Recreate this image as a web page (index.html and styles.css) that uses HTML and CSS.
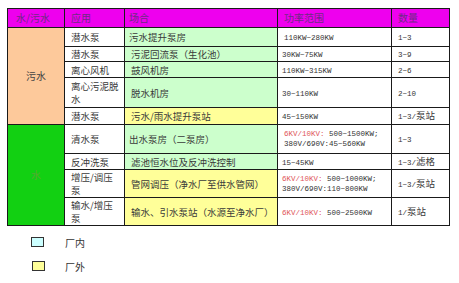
FILE: index.html
```html
<!DOCTYPE html>
<html lang="zh">
<head>
<meta charset="utf-8">
<link rel="stylesheet" href="styles.css">
</head>
<body>
<table class="grid">
  <colgroup>
    <col class="c1"><col class="c2"><col class="c3"><col class="c4"><col class="c5">
  </colgroup>
  <thead>
    <tr class="h-head">
      <th>水/污水</th><th>应用</th><th>场合</th><th>功率范围</th><th>数量</th>
    </tr>
  </thead>
  <tbody>
    <tr class="h-r1">
      <td rowspan="5" class="grp sewage">污水</td>
      <td>潜水泵</td><td class="in">污水提升泵房</td>
      <td><span class="num">110KW~280KW</span></td><td><span class="num">1~3</span></td>
    </tr>
    <tr class="h-r2">
      <td>潜水泵</td><td class="in">污泥回流泵（生化池）</td>
      <td><span class="num">30KW~75KW</span></td><td><span class="num">3~9</span></td>
    </tr>
    <tr class="h-r3">
      <td>离心风机</td><td class="in">鼓风机房</td>
      <td><span class="num">110KW~315KW</span></td><td><span class="num">2~6</span></td>
    </tr>
    <tr class="h-r4">
      <td class="wrap">离心污泥脱<br>水</td><td class="in">脱水机房</td>
      <td><span class="num">30~110KW</span></td><td><span class="num">2~10</span></td>
    </tr>
    <tr class="h-r5">
      <td>潜水泵</td><td class="out">污水/雨水提升泵站</td>
      <td><span class="num">45~150KW</span></td><td><span class="num">1~3/</span>泵站</td>
    </tr>
    <tr class="h-r6">
      <td rowspan="4" class="grp water">水</td>
      <td>清水泵</td><td class="in">出水泵房（二泵房）</td>
      <td><span class="num two"><span class="red">6KV/10KV:</span> 500~1500KW;<br>380V/690V:45~560KW</span></td>
      <td><span class="num">1~3</span></td>
    </tr>
    <tr class="h-r7">
      <td>反冲洗泵</td><td class="in">滤池恒水位及反冲洗控制</td>
      <td><span class="num">15~45KW</span></td><td><span class="num">1~3/</span>滤格</td>
    </tr>
    <tr class="h-r8">
      <td class="wrap">增压/调压<br>泵</td><td class="out">管网调压（净水厂至供水管网）</td>
      <td><span class="num two"><span class="red">6KV/10KV:</span> 500~1000KW;<br>380V/690V:110~800KW</span></td>
      <td><span class="num">1~3/</span>泵站</td>
    </tr>
    <tr class="h-r9">
      <td class="wrap">输水/增压<br>泵</td><td class="out">输水、引水泵站（水源至净水厂）</td>
      <td><span class="num"><span class="red">6KV/10KV:</span> 500~2500KW</span></td>
      <td><span class="num">1/</span>泵站</td>
    </tr>
  </tbody>
</table>

<ul class="legend">
  <li><span class="swatch sw-in"></span><span class="label">厂内</span></li>
  <li><span class="swatch sw-out"></span><span class="label">厂外</span></li>
</ul>
</body>
</html>
```

FILE: styles.css
```css
html, body {
  margin: 0;
  padding: 0;
  background: #ffffff;
}

body {
  width: 459px;
  height: 283px;
  overflow: hidden;
  font-family: "Noto Sans CJK SC", "DejaVu Sans", sans-serif;
  color: #3a3a3a;
}

.grid {
  margin: 8px 0 0 7px;
  border-collapse: collapse;
  table-layout: fixed;
  width: 442px;
  font-size: 9.5px;
  line-height: 12px;
}

.c1 { width: 57px; }
.c2 { width: 60px; }
.c3 { width: 153px; }
.c4 { width: 114px; }
.c5 { width: 58px; }

.grid th,
.grid td {
  border: 1px solid #1a1a1a;
  padding: 0 0 0 6px;
  text-align: left;
  vertical-align: middle;
  font-weight: normal;
  overflow: hidden;
  white-space: nowrap;
}

.grid td:nth-child(3),
.grid th:nth-child(3) { padding-left: 4px; }

.grid thead th {
  background: #ee00ee;
  color: #6e2a86;
  font-size: 10px;
}

.grid thead th:first-child { padding-left: 8px; }

.h-head { height: 19px; }
.h-r1 { height: 19px; }
.h-r2 { height: 15px; }
.h-r3 { height: 16px; }
.h-r4 { height: 30px; }
.h-r5 { height: 17px; }
.h-r6 { height: 29px; }
.h-r7 { height: 16px; }
.h-r8 { height: 28px; }
.h-r9 { height: 28px; }

.grid td.wrap {
  line-height: 13px;
}

.grid td.grp {
  text-align: center;
  padding: 0;
  font-size: 10px;
}

.sewage {
  background: #fdc99b;
  color: #444444;
}

.water {
  background: #12d012;
  color: #55aa33;
}

.in { background: #ccffcc; }
.out { background: #ffff99; }

.num {
  font-family: "Liberation Mono", "Noto Sans CJK SC", monospace;
  font-size: 7.5px;
  font-weight: normal;
  color: #333333;
}

.num.two {
  display: inline-block;
  line-height: 10px;
  vertical-align: middle;
}

.red { color: #e0565a; }

.legend {
  list-style: none;
  margin: 10px 0 0 31px;
  padding: 0;
  display: flex;
  flex-direction: column;
  gap: 12px;
}

.legend li {
  display: flex;
  align-items: center;
  height: 12px;
}

.swatch {
  display: block;
  width: 11px;
  height: 8px;
  border: 1px solid #333333;
}

.sw-in { background: #ccffff; }
.sw-out { background: #ffff99; margin-left: 1px; }

.label {
  margin-left: 21px;
  font-size: 10px;
  color: #333333;
}

.legend li:nth-child(2) .label { margin-left: 20px; }
```
